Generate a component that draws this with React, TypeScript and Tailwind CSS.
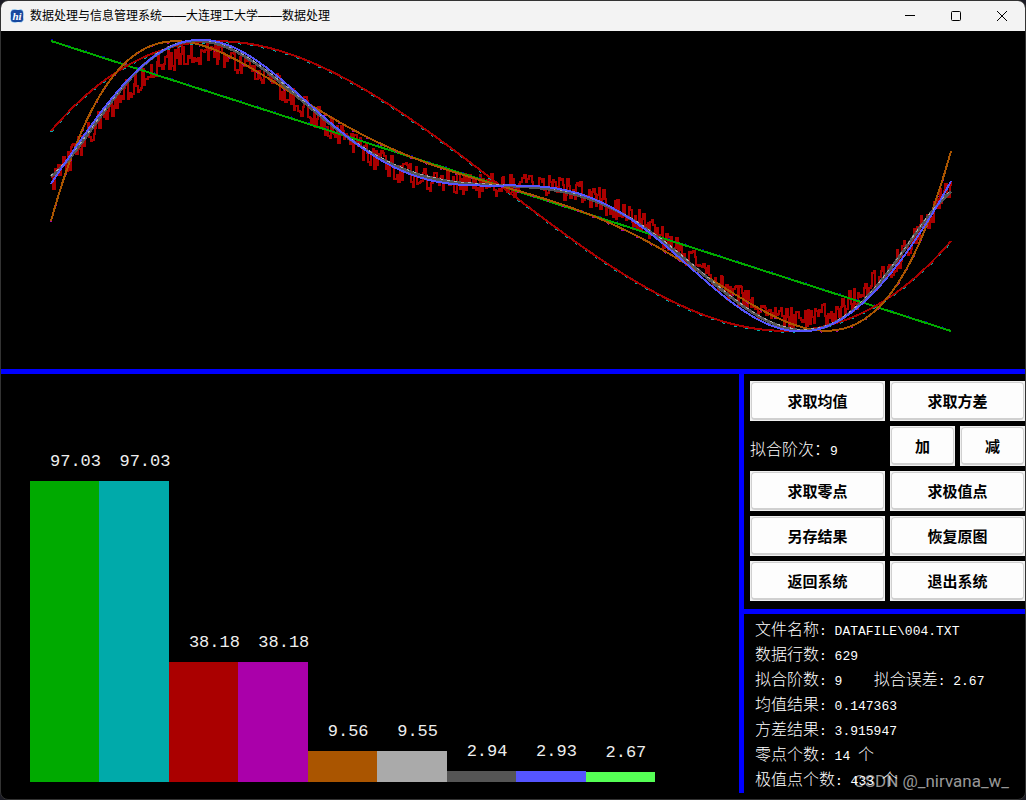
import type { ReactNode } from 'react';

type Point = [number, number];

const CENTER_X = 501;
const CENTER_Y = 186;
const HALF_WIDTH = 450;
const SAMPLES = 629;

const bars = [
    { value: 97.03, color: 'bg-[#00aa00]' },
    { value: 97.03, color: 'bg-[#00aaaa]' },
    { value: 38.18, color: 'bg-[#aa0000]' },
    { value: 38.18, color: 'bg-[#aa00aa]' },
    { value: 9.56, color: 'bg-[#aa5500]' },
    { value: 9.55, color: 'bg-[#aaaaaa]' },
    { value: 2.94, color: 'bg-[#555555]' },
    { value: 2.93, color: 'bg-[#5555ff]' },
    { value: 2.67, color: 'bg-[#55ff55]' },
];

const results = [
    '文件名称: DATAFILE\\004.TXT',
    '数据行数: 629',
    '拟合阶数: 9    拟合误差: 2.67',
    '均值结果: 0.147363',
    '方差结果: 3.915947',
    '零点个数: 14 个',
    '极值点个数: 433 个',
];

const order7: Point[] = [
    [51, 176], [62, 168], [73, 153], [98, 120], [120, 90], [136, 73], [150, 60], [165, 50], [180, 44],
    [200, 41], [215, 42], [233, 50], [250, 59], [267, 71], [300, 99], [320, 117], [345, 137], [367, 150],
    [387, 161], [407, 170], [433, 178], [460, 183], [501, 186], [540, 187], [567, 192], [587, 199],
    [607, 208], [640, 224], [660, 238], [680, 255], [700, 271], [720, 288], [740, 304], [760, 318],
    [780, 326], [800, 330], [818, 329], [840, 320], [853, 311], [867, 297], [880, 282], [893, 264],
    [907, 246], [920, 228], [935, 209], [951, 191],
];

const order9: Point[] = [
    [51, 184], [62, 168], [73, 150], [98, 117], [120, 89], [136, 71], [150, 59], [170, 47], [190, 41],
    [210, 41], [227, 45], [247, 54], [267, 67], [300, 96], [320, 114], [345, 136], [367, 151], [387, 163],
    [407, 173], [433, 181], [460, 184], [490, 186], [540, 186], [567, 190], [587, 197], [607, 207],
    [640, 225], [660, 240], [680, 258], [700, 275], [720, 293], [740, 310], [760, 322], [780, 328],
    [800, 330], [820, 328], [840, 320], [853, 312], [867, 300], [880, 286], [893, 269], [907, 252],
    [920, 233], [937, 206], [951, 181],
];

// Least squares fit, coefficients in ascending order of u on [-1, 1]
function fit(points: Point[], degree: number) {
    const n = degree + 1;
    const m = Array.from({ length: n }, () => new Array<number>(n + 1).fill(0));
    for (const [x, y] of points) {
        const u = (x - CENTER_X) / HALF_WIDTH;
        for (let r = 0; r < n; r++) {
            for (let c = 0; c < n; c++) m[r][c] += u ** (r + c);
            m[r][n] += (y - CENTER_Y) * u ** r;
        }
    }
    for (let i = 0; i < n; i++) {
        let pivot = i;
        for (let r = i + 1; r < n; r++) if (Math.abs(m[r][i]) > Math.abs(m[pivot][i])) pivot = r;
        [m[i], m[pivot]] = [m[pivot], m[i]];
        for (let r = 0; r < n; r++) {
            if (r === i) continue;
            const k = m[r][i] / m[i][i];
            for (let c = i; c <= n; c++) m[r][c] -= k * m[i][c];
        }
    }
    return m.map((row, i) => row[n] / row[i]);
}

function evaluate(coefficients: number[], x: number) {
    const u = (x - CENTER_X) / HALF_WIDTH;
    return CENTER_Y + coefficients.reduce((sum, c, i) => sum + c * u ** i, 0);
}

function curve(coefficients: number[]) {
    const points: string[] = [];
    for (let x = 51; x <= 951; x += 3) points.push(`${x} ${evaluate(coefficients, x).toFixed(1)}`);
    return 'M' + points.join('L');
}

const coefficients9 = fit(order9, 9);

// The measured samples, joined as a staircase
function rawData() {
    let d = 'M52 178';
    let seed = 20221;
    for (let i = 0; i < SAMPLES; i++) {
        seed = (seed * 16807) % 2147483647;
        const x = Math.round(52 + (i * 899) / (SAMPLES - 1));
        const noise = (seed / 2147483647 - 0.5) * 24;
        d += `H${x}V${Math.round(CENTER_Y + (evaluate(coefficients9, x) - CENTER_Y) * 0.91 + noise)}`;
    }
    return d;
}

const rawPath = rawData();
const order1Path = 'M51 41L951 331';
const order3Path = curve([0, 345, 0, -290]);
const order5Path = curve([0, 128, 0, 468, 0, -631]);
const order7Path = curve(fit(order7, 9));
const order9Path = curve(coefficients9);

function FitChart() {
    return (
        <svg viewBox="1 31 1024 338" className="block w-full" fill="none" strokeWidth={2} shapeRendering="crispEdges">
            <path d={rawPath} stroke="#aa0000" />
            <path d={order1Path} stroke="#0000aa" strokeDasharray="2 16" transform="translate(0 -1)" />
            <path d={order1Path} stroke="#00aa00" />
            <path d={order3Path} stroke="#00aaaa" strokeDasharray="3 9" transform="translate(0 1)" />
            <path d={order3Path} stroke="#aa0000" />
            <path d={order5Path} stroke="#aa00aa" strokeDasharray="2 14" transform="translate(0 1)" />
            <path d={order5Path} stroke="#aa5500" />
            <path d={order7Path} stroke="#555555" strokeWidth={3} />
            <path d={order7Path} stroke="#aaaaaa" strokeWidth={1} strokeDasharray="3 4" transform="translate(0 -1)" />
            <path d={order9Path} stroke="#5555ff" />
        </svg>
    );
}

// Half-width characters take half the advance of the Chinese ones
function MixedText({ text }: { text: string }) {
    return (
        <>
            {text.split(/([\x20-\x7e]+)/).map((part, i) =>
                i % 2 ? (
                    <span key={i} className="font-['Liberation_Mono',monospace] text-[13px] leading-none">{part}</span>
                ) : (
                    part
                ),
            )}
        </>
    );
}

function PanelButton({ children }: { children: ReactNode }) {
    return (
        <button type="button" className="h-10 w-full bg-[#f0f0f0] p-px text-[15px] font-bold text-black">
            <span className="flex h-full items-center justify-center rounded border border-b-2 border-[#d0d0d0] bg-[#fdfdfd] pt-[3px]">
                {children}
            </span>
        </button>
    );
}

function TitleBar() {
    return (
        <header className="flex h-[30px] items-center bg-[#f3f3f3] pl-2 text-black">
            <svg viewBox="0 0 16 16" className="h-4 w-4">
                <path d="M3 1.5L6 1L9 2L12 1L14 2.5L15 6L14.5 9L15 12L12.5 14.5L9 14L6 15L2.5 14L1 11L1.5 8L1 5Z" fill="#8fc4ee" />
                <rect x="2" y="2" width="12" height="12" rx="3" fill="#17489f" />
                <text x="8" y="12" textAnchor="middle" fill="#ffffff" className="font-['Liberation_Serif',serif] text-[11px] font-bold italic">hi</text>
            </svg>
            <h1 className="flex-1 pl-[5px] text-xs">数据处理与信息管理系统——大连理工大学——数据处理</h1>
            <button type="button" aria-label="最小化" className="flex h-full w-[46px] items-center justify-center">
                <svg viewBox="0 0 10 10" className="h-[10px] w-[10px]" stroke="currentColor"><path d="M0 4.5H10" /></svg>
            </button>
            <button type="button" aria-label="最大化" className="flex h-full w-[46px] items-center justify-center">
                <svg viewBox="0 0 10 10" className="h-[10px] w-[10px]" stroke="currentColor" fill="none"><rect x="0.5" y="0.5" width="9" height="9" rx="1" /></svg>
            </button>
            <button type="button" aria-label="关闭" className="flex h-full w-[46px] items-center justify-center">
                <svg viewBox="0 0 10 10" className="h-[10px] w-[10px]" stroke="currentColor"><path d="M0 0L10 10M10 0L0 10" /></svg>
            </button>
        </header>
    );
}

export default function App() {
    return (
        <div className="min-h-screen bg-[#1b1b24] font-['Liberation_Sans','Noto_Sans_CJK_SC',sans-serif]">
            <div className="relative flex min-h-screen flex-col overflow-hidden rounded-lg border border-[#333333] bg-black text-white">
                <TitleBar />
                <FitChart />
                <div className="h-[5px] bg-[#0000ff]" />

                <main className="flex flex-1">
                    <section className="flex flex-1 items-end pr-[84px] pb-[17px] pl-[29px]">
                        {bars.map((bar, i) => (
                            <div key={i} className="min-w-0 flex-1">
                                <p className="mb-[9px] pl-5 font-['Liberation_Mono',monospace] text-[17px] leading-5 text-[#eeeeee]">
                                    {bar.value.toFixed(2)}
                                </p>
                                <div className={bar.color} style={{ height: Math.round(bar.value * 3.08 + 2) }} />
                            </div>
                        ))}
                    </section>

                    <div className="mb-[6px] w-[5px] bg-[#0000ff]" />

                    <aside className="w-[281px]">
                        <div className="grid grid-cols-2 gap-[5px] pt-[7px] pb-2 pl-[6px]">
                            <PanelButton>求取均值</PanelButton>
                            <PanelButton>求取方差</PanelButton>
                            <p className="self-center pt-2 font-light"><MixedText text="拟合阶次：9" /></p>
                            <div className="grid grid-cols-2 gap-[5px]">
                                <PanelButton>加</PanelButton>
                                <PanelButton>减</PanelButton>
                            </div>
                            <PanelButton>求取零点</PanelButton>
                            <PanelButton>求极值点</PanelButton>
                            <PanelButton>另存结果</PanelButton>
                            <PanelButton>恢复原图</PanelButton>
                            <PanelButton>返回系统</PanelButton>
                            <PanelButton>退出系统</PanelButton>
                        </div>
                        <div className="h-[5px] bg-[#0000ff]" />
                        <ul className="pt-[3px] pl-[11px] font-light">
                            {results.map((line) => (
                                <li key={line} className="leading-[25px] whitespace-pre"><MixedText text={line} /></li>
                            ))}
                        </ul>
                    </aside>
                </main>

                <p className="absolute right-4 bottom-2 font-['Roboto',sans-serif] text-[17px] leading-5 text-white/60">CSDN @_nirvana_w_</p>
            </div>
        </div>
    );
}
